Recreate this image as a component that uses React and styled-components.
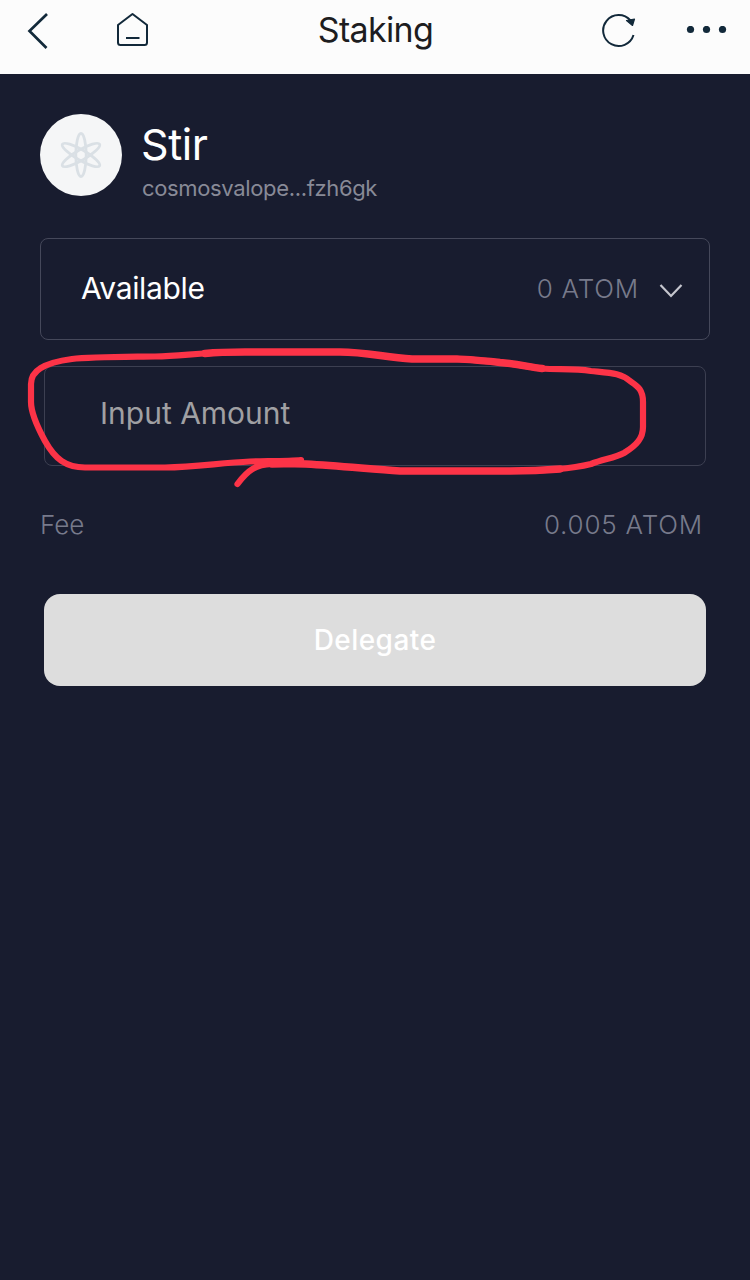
import styled, { createGlobalStyle } from "styled-components";
import { useState } from "react";

const GlobalStyle = createGlobalStyle`
    * {
        box-sizing: border-box;
    }
    body {
        margin: 0;
        background-color: #181C2F;
        font-family: Inter, "Liberation Sans", sans-serif;
    }
`

const Page = styled.div`
    min-height: 1280px;
    background-color: #181C2F;
`

const Header = styled.header`
    display: grid;
    grid-template-columns: 1fr auto 1fr;
    height: 74px;
    padding: 0 22px 14px 26px;
    background-color: #FCFCFC;
    color: #12293A;
    > h1 {
        margin: 0 3px 0 0;
        font-size: 34px;
        font-weight: 400;
        line-height: 60px;
        letter-spacing: -0.65px;
        color: #1D1D1F;
    }
    svg {
        display: block;
    }
`

const HeaderSide = styled.div`
    display: flex;
    align-items: center;
    justify-content: ${({ $right }) => $right ? 'flex-end' : 'flex-start'};
    gap: ${({ $right }) => $right ? '49px' : '65px'};
`

const Content = styled.main`
    padding: 40px;
`

const Validator = styled.section`
    display: flex;
    gap: 20px;
    height: 98px;
`

const Avatar = styled.div`
    display: flex;
    align-items: center;
    justify-content: center;
    width: 82px;
    height: 82px;
    border-radius: 50%;
    background-color: #F5F6F7;
`

const ValidatorText = styled.div`
    padding-top: 3px;
    > h2 {
        margin: 0 0 0 -1px;
        font-size: 43px;
        font-weight: 400;
        line-height: 54px;
        letter-spacing: -0.4px;
        color: #FFFFFF;
    }
    > p {
        margin: 4px 0 0;
        font-size: 22px;
        line-height: 26px;
        letter-spacing: -0.35px;
        color: #888A97;
    }
`

const Balance = styled.button`
    display: flex;
    align-items: center;
    width: 100%;
    height: 102px;
    margin: 26px 0;
    padding: 0 26px 2px 40px;
    border: 1px solid #45485A;
    border-radius: 8px;
    background: none;
    font-family: inherit;
    font-size: 30px;
    letter-spacing: -0.35px;
    color: #FFFFFF;
    > span {
        flex: 1;
        text-align: left;
    }
    > svg {
        margin: 6px 0 0 20px;
    }
`

const Amount = styled.div`
    font-size: 26px;
    font-weight: 300;
    letter-spacing: ${({ $tight }) => $tight ? '0' : '0.8px'};
    color: #777A8B;
`

const AmountField = styled.div`
    position: relative;
    height: 100px;
    margin: 0 4px;
    > input {
        width: 100%;
        height: 100%;
        padding: 0 55px 7px;
        border: 1px solid #3C3F51;
        border-radius: 8px;
        outline: none;
        background: none;
        font-family: inherit;
        font-size: 30px;
        letter-spacing: 0;
        color: #FFFFFF;
    }
    > input::placeholder {
        color: #A0A0A3;
        opacity: 1;
    }
`

const Marker = styled.svg`
    position: absolute;
    left: -24px;
    top: -26px;
    pointer-events: none;
`

const FeeRow = styled.div`
    display: flex;
    justify-content: space-between;
    margin: 43px 7px 53px 0;
    line-height: 32px;
`

const DelegateButton = styled.button`
    display: block;
    width: calc(100% - 8px);
    height: 92px;
    margin: 0 4px;
    padding: 0;
    border: none;
    border-radius: 16px;
    background-color: #DDDDDD;
    font-family: inherit;
    font-size: 28px;
    font-weight: 500;
    letter-spacing: 0.45px;
    color: #FFFFFF;
`

const BackIcon = () => (
    <svg width="26" height="40" fill="none" stroke="currentColor" strokeWidth="2.7">
        <path d="M21 4L3.500 21L20.500 38" />
    </svg>
)

const HomeIcon = () => (
    <svg width="32" height="36" fill="none" stroke="currentColor" strokeWidth="2">
        <path d="M1 13L15.500 2L30 13V30.500Q30 33 27.500 33H3.500Q1 33 1 30.500Z" strokeLinejoin="round" />
        <path d="M9 26H22.500" />
    </svg>
)

const RefreshIcon = () => (
    <svg width="36" height="36" fill="none" stroke="currentColor" strokeWidth="2">
        <path d="M29.500 8.500A15.500 15.500 0 1 0 32.500 23" />
        <path d="M25.500 8.500L33.500 7L31.500 13.500Z" fill="currentColor" strokeWidth="1.2" strokeLinejoin="round" />
    </svg>
)

const MoreIcon = () => (
    <svg width="42" height="8" fill="currentColor">
        <circle cx="4.5" cy="3.5" r="3.6" />
        <circle cx="20.5" cy="3.5" r="3.6" />
        <circle cx="36.5" cy="3.5" r="3.6" />
    </svg>
)

const AtomIcon = () => (
    <svg width="48" height="48" viewBox="-24 -24 48 48" fill="none" stroke="#DAE0E5" strokeWidth="2.8">
        {[0, 60, 120].map((angle) => (
            <ellipse key={angle} rx="5.2" ry="21.5" transform={`rotate(${angle})`} />
        ))}
    </svg>
)

const App = () => {
    const [amount, setAmount] = useState('')

    return (
        <Page>
            <GlobalStyle />
            <Header>
                <HeaderSide>
                    <BackIcon />
                    <HomeIcon />
                </HeaderSide>
                <h1>Staking</h1>
                <HeaderSide $right>
                    <RefreshIcon />
                    <MoreIcon />
                </HeaderSide>
            </Header>
            <Content>
                <Validator>
                    <Avatar><AtomIcon /></Avatar>
                    <ValidatorText>
                        <h2>Stir</h2>
                        <p>cosmosvalope...fzh6gk</p>
                    </ValidatorText>
                </Validator>
                <Balance>
                    <span>Available</span>
                    <Amount>0 ATOM</Amount>
                    <svg width="24" height="16" fill="none" stroke="#C5C6CE" strokeWidth="2.2">
                        <path d="M1.5 2L12 13L22.5 2" />
                    </svg>
                </Balance>
                <AmountField>
                    <input
                        placeholder="Input Amount"
                        value={amount}
                        onChange={(e) => setAmount(e.target.value)}
                    />
                    <Marker
                        width="640"
                        height="160"
                        viewBox="20 340 640 160"
                        fill="none"
                        stroke="#FC3347"
                        strokeWidth="6.2"
                        strokeLinecap="round"
                        strokeLinejoin="round"
                    >
                        <path d="M237.500 484C248 470 256 464.500 272 464C284 464 295 463.500 306 464C340 466 370 469 400 471H510C546 471 571 469 591 464C604 459 615 458 624 453C637 445 643 438 643 427V402C643 389 637 386 630 381C621 373 611 373 591 371C573 368 556 370 542 368.500C528 367 520 364 500 362.500C480 360 467 359.500 457 359H412C384 357 365 352 340 352H245C200 352 185 356 155 356.500C120 357 90 357 72 359C43 363 31 371 31 384V402C31 414 39 430 45 441C55 459 66 467.500 85 467.500H165C195 467 220 463 250 461.500C270 461 290 461 301 460" />
                        {/* the pen presses harder on the long horizontal strokes */}
                        <path
                            strokeWidth="7.4"
                            d="M205 353.500C220 352 232 352 245 352H340C365 352 384 357 412 359H457C467 359.500 480 360 500 362.500C520 364 528 367 542 368.500M272 464C284 464 295 463.500 306 464C340 466 370 469 400 471H510C530 471 548 470 560 469"
                        />
                    </Marker>
                </AmountField>
                <FeeRow>
                    <Amount $tight>Fee</Amount>
                    <Amount>0.005 ATOM</Amount>
                </FeeRow>
                <DelegateButton>Delegate</DelegateButton>
            </Content>
        </Page>
    );
}

export default App;
